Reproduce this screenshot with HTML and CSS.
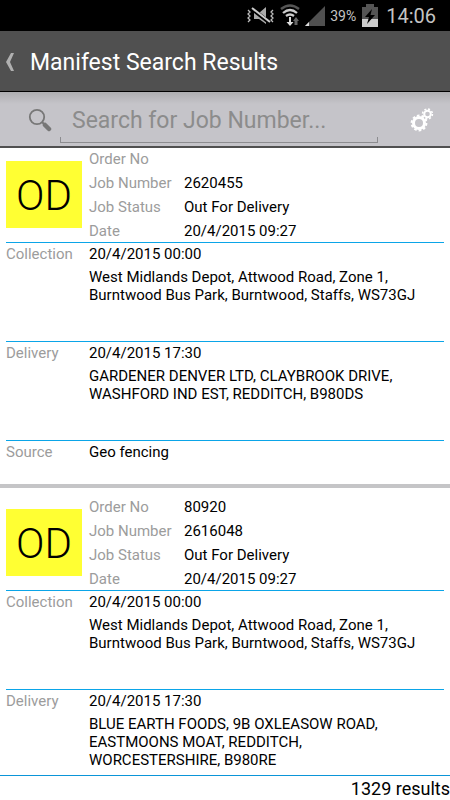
FILE: index.html
```
<!DOCTYPE html>
<html lang="en">
  <head>
    <meta charset="utf-8">
    <meta name="viewport" content="width=device-width, initial-scale=1">
    <title>Manifest Search Results</title>
    <link rel="stylesheet" href="styles.css">
  </head>
  <body>
    <div class="status-bar">
      <svg class="status-icon" width="30" height="20" viewBox="0 0 30 20">
        <path d="M8 7h5l7-6v17l-7-5H8z" fill="#aaa"/>
        <path d="M5 2l19 15" stroke="#000" stroke-width="4"/>
        <path d="M6 2l18 14" stroke="#ccc" stroke-width="2"/>
        <path d="M2 4l2 2-2 2 2 2-2 2 2 2-2 2M27 4l-2 2 2 2-2 2 2 2-2 2 2 2" fill="none" stroke="#bbb" stroke-width="1.3"/>
      </svg>
      <svg class="status-icon" width="20" height="23" viewBox="1 0 20 23">
        <path d="M2 5q9-7 18 0" fill="none" stroke="#555" stroke-width="2.5"/>
        <path d="M4 9q7-6 14 0M7 12q4-3 8 0" fill="none" stroke="#ccc" stroke-width="2.3"/>
        <path d="M10 13v5H7.500l3.500 4 3.500-4H12v-5z" fill="#ddd"/>
        <path d="M15.500 21v-4H14l3-4 3 4h-1.500v4z" fill="#666"/>
      </svg>
      <svg class="status-icon" width="22" height="22" viewBox="0 0 22 22">
        <path d="M21 1v20H1z" fill="#505050"/>
        <path d="M5 17v4H1z" fill="#ddd"/>
      </svg>
      <span class="battery-level">39%</span>
      <svg class="status-icon" width="16" height="23" viewBox="0 0 16 23">
        <path d="M4 0h8v3h4v12H0V3h4z" fill="#555"/>
        <path d="M0 15h16v8H0z" fill="#ccc"/>
        <path d="M10 5L3 13h4l-2 7 8-9H8.500z" fill="#000"/>
      </svg>
      <span class="clock">14:06</span>
    </div>

    <header class="title-bar">
      <a class="back" href="#" aria-label="Back">
        <svg width="10" height="20" viewBox="0 0 10 20"><path d="M6 1h3L5 10l4 9H6L1 10z" fill="#b0b0b0"/></svg>
      </a>
      <h1>Manifest Search Results</h1>
    </header>

    <form class="search-bar">
      <svg class="search-icon" width="24" height="24" viewBox="0 0 24 24">
        <circle cx="9" cy="9" r="7.200" fill="none" stroke="#777" stroke-width="1.800"/>
        <path d="M14 14l2 2" stroke="#777" stroke-width="2"/>
        <path d="M17 17l4 4" stroke="#777" stroke-width="4.500" stroke-linecap="round"/>
      </svg>
      <div class="search-field">
        <input type="text" aria-label="Search for Job Number" placeholder="Search for Job Number...">
      </div>
      <button class="settings" type="button" aria-label="Settings">
        <svg width="24" height="24" viewBox="0 0 24 24" fill="none" stroke="#fff">
          <circle cx="9" cy="15" r="5.500" stroke-width="3"/>
          <circle cx="9" cy="15" r="7.400" stroke-width="2" stroke-dasharray="2.600 2.050"/>
          <circle cx="17.500" cy="6" r="3.300" stroke-width="2"/>
          <circle cx="17.500" cy="6" r="4.900" stroke-width="1.600" stroke-dasharray="2 1.850"/>
        </svg>
      </button>
    </form>

    <main class="results">
      <article class="job">
        <div class="job-summary">
          <div class="badge">OD</div>
          <dl>
            <dt>Order No</dt><dd></dd>
            <dt>Job Number</dt><dd>2620455</dd>
            <dt>Job Status</dt><dd>Out For Delivery</dd>
            <dt>Date</dt><dd>20/4/2015 09:27</dd>
          </dl>
        </div>
        <section class="leg">
          <h2>Collection</h2>
          <div>
            <p class="time">20/4/2015 00:00</p>
            <p class="address">West Midlands Depot, Attwood Road, Zone 1, Burntwood Bus Park, Burntwood, Staffs, WS73GJ</p>
          </div>
        </section>
        <section class="leg">
          <h2>Delivery</h2>
          <div>
            <p class="time">20/4/2015 17:30</p>
            <p class="address">GARDENER DENVER LTD, CLAYBROOK DRIVE, WASHFORD IND EST, REDDITCH, B980DS</p>
          </div>
        </section>
        <section class="leg source">
          <h2>Source</h2>
          <p class="time">Geo fencing</p>
        </section>
      </article>

      <article class="job">
        <div class="job-summary">
          <div class="badge">OD</div>
          <dl>
            <dt>Order No</dt><dd>80920</dd>
            <dt>Job Number</dt><dd>2616048</dd>
            <dt>Job Status</dt><dd>Out For Delivery</dd>
            <dt>Date</dt><dd>20/4/2015 09:27</dd>
          </dl>
        </div>
        <section class="leg">
          <h2>Collection</h2>
          <div>
            <p class="time">20/4/2015 00:00</p>
            <p class="address">West Midlands Depot, Attwood Road, Zone 1, Burntwood Bus Park, Burntwood, Staffs, WS73GJ</p>
          </div>
        </section>
        <section class="leg">
          <h2>Delivery</h2>
          <div>
            <p class="time">20/4/2015 17:30</p>
            <p class="address">BLUE EARTH FOODS, 9B OXLEASOW ROAD, EASTMOONS MOAT, REDDITCH, WORCESTERSHIRE, B980RE</p>
          </div>
        </section>
      </article>
    </main>

    <footer class="count">1329 results</footer>
  </body>
</html>
```

FILE: styles.css
```
* {
  box-sizing: border-box;
}

body {
  display: flex;
  flex-direction: column;
  height: 100vh;
  margin: 0;
  background: #fff;
  color: #000;
  font-family: Roboto, "Liberation Sans", sans-serif;
  font-size: 15px;
}

h1, h2, p, dl, dd {
  margin: 0;
  font-weight: normal;
}

.status-bar {
  display: flex;
  flex: none;
  align-items: center;
  justify-content: flex-end;
  gap: 4px;
  height: 31px;
  padding-right: 14px;
  background: #000;
  color: #c4c4c4;
}

.battery-level {
  margin-right: 2px;
  font-size: 14px;
}

.clock {
  margin-left: 4px;
  font-size: 20px;
}

.title-bar {
  display: flex;
  flex: none;
  align-items: center;
  gap: 15px;
  height: 61px;
  padding: 2px 0 0 5px;
  background: #505050;
  border-bottom: 1px solid #000;
  color: #fff;
}

.back {
  display: flex;
}

.title-bar h1 {
  font-size: 23px;
}

.search-bar {
  display: flex;
  flex: none;
  align-items: flex-start;
  height: 56px;
  padding: 0 16px 0 28px;
  background: linear-gradient(#aeaeb1, #c5c4c9 12px);
  border-bottom: 2px solid #505050;
}

.search-icon {
  margin-top: 16px;
}

/* underline with a short tick at each end */
.search-field {
  flex: 1;
  height: 51px;
  margin: 0 32px 0 8px;
  background:
    linear-gradient(#8c8c8f, #8c8c8f) left bottom / 1px 5px no-repeat,
    linear-gradient(#8c8c8f, #8c8c8f) right bottom / 1px 5px no-repeat;
  border-bottom: 1px solid #8c8c8f;
}

.search-field input {
  width: 100%;
  height: 50px;
  padding: 6px 12px 0;
  border: 0;
  outline: 0;
  background: none;
  font: 23px Roboto, "Liberation Sans", sans-serif;
}

.search-field input::placeholder {
  color: #8c8c8c;
}

.settings {
  margin-top: 16px;
  padding: 0;
  border: 0;
  background: none;
}

.settings svg {
  display: block;
}

.results {
  flex: 1;
  min-height: 0;
  overflow: hidden;
}

.job {
  padding: 6px 6px 0;
  border-bottom: 4px solid #c5c5c7;
}

/* list is scrolled slightly under the search bar */
.job:first-child {
  margin-top: -8px;
}

.job-summary {
  display: flex;
  align-items: center;
  gap: 7px;
}

.badge {
  width: 76px;
  height: 67px;
  background: #ffff33;
  font-size: 42px;
  font-weight: 300;
  line-height: 70px;
  text-align: center;
}

.job dl {
  display: grid;
  grid-template-columns: 95px 1fr;
  grid-auto-rows: 24px;
  flex: 1;
  line-height: 26px;
}

.job dt,
.leg h2 {
  color: #9c9c9c;
  font-size: 15px;
}

.leg {
  display: grid;
  grid-template-columns: 83px 1fr;
  min-height: 99px;
  border-top: 1px solid #0ba5e8;
  line-height: 22px;
}

.leg.source {
  min-height: 44px;
}

.address {
  max-width: 340px;
  margin-top: 3px;
  line-height: 18px;
}

.count {
  flex: none;
  height: 25px;
  border-top: 1px solid #0b95d8;
  font-size: 18px;
  line-height: 26px;
  text-align: right;
}
```
